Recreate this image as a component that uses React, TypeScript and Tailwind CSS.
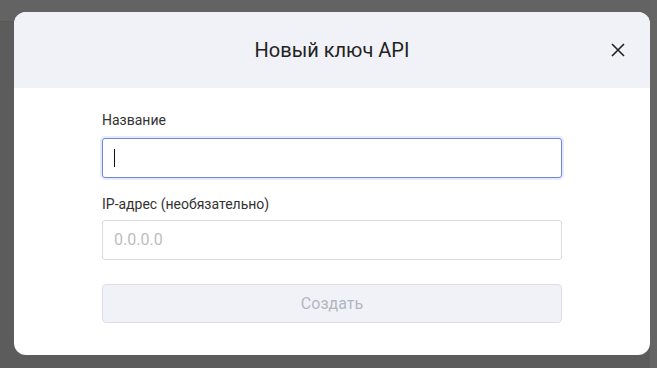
import React from "react";

export default function App() {
  return (
    <div
      className="relative w-[657px] h-[368px] overflow-hidden bg-[#5c5c5c]"
      style={{ fontFamily: "Roboto, 'Noto Sans', sans-serif" }}
    >
      <div className="absolute left-0 top-0 w-full h-[22px] bg-[#636363] border-b border-[#585858]" />
      <div className="absolute right-0 top-0 w-[7px] h-full bg-[#656565]" />
      <div className="absolute left-[14px] top-[12px] w-[636px] h-[343px] rounded-[12px] bg-white overflow-hidden flex flex-col">
        <div className="h-[76px] bg-[#f1f2f7] flex items-center justify-center relative shrink-0">
          <span className="text-[20px] text-[#222] leading-none">Новый ключ API</span>
          <button className="absolute left-[596px] top-[30px] w-[16px] h-[16px] flex items-center justify-center">
            <svg width="16" height="16" viewBox="0 0 16 16">
              <path d="M2 2 L14 14 M14 2 L2 14" stroke="#222" strokeWidth="1.6" fill="none" />
            </svg>
          </button>
        </div>
        <div className="px-[88px] pt-[22px] flex flex-col">
          <label className="text-[14px] text-[#333] leading-[20px] h-[20px]">Название</label>
          <div className="mt-[8px] h-[40px] rounded-[3px] border border-[#6f86e3] shadow-[0_0_0_2px_#e6eafb] flex items-center px-[11px]">
            <div className="w-[1px] h-[18px] bg-[#111]" />
          </div>
          <label className="mt-[16px] text-[14px] text-[#333] leading-[20px] h-[20px]">IP-адрес (необязательно)</label>
          <div className="mt-[6px] h-[40px] rounded-[3px] border border-[#dcdcdc] flex items-center px-[11px]">
            <span className="text-[16px] text-[#bdbdbd]">0.0.0.0</span>
          </div>
          <button className="mt-[24px] h-[39px] rounded-[4px] border border-[#dcdde5] bg-[#f1f2f7] text-[16px] text-[#b3b6c2]">
            Создать
          </button>
        </div>
      </div>
    </div>
  );
}
